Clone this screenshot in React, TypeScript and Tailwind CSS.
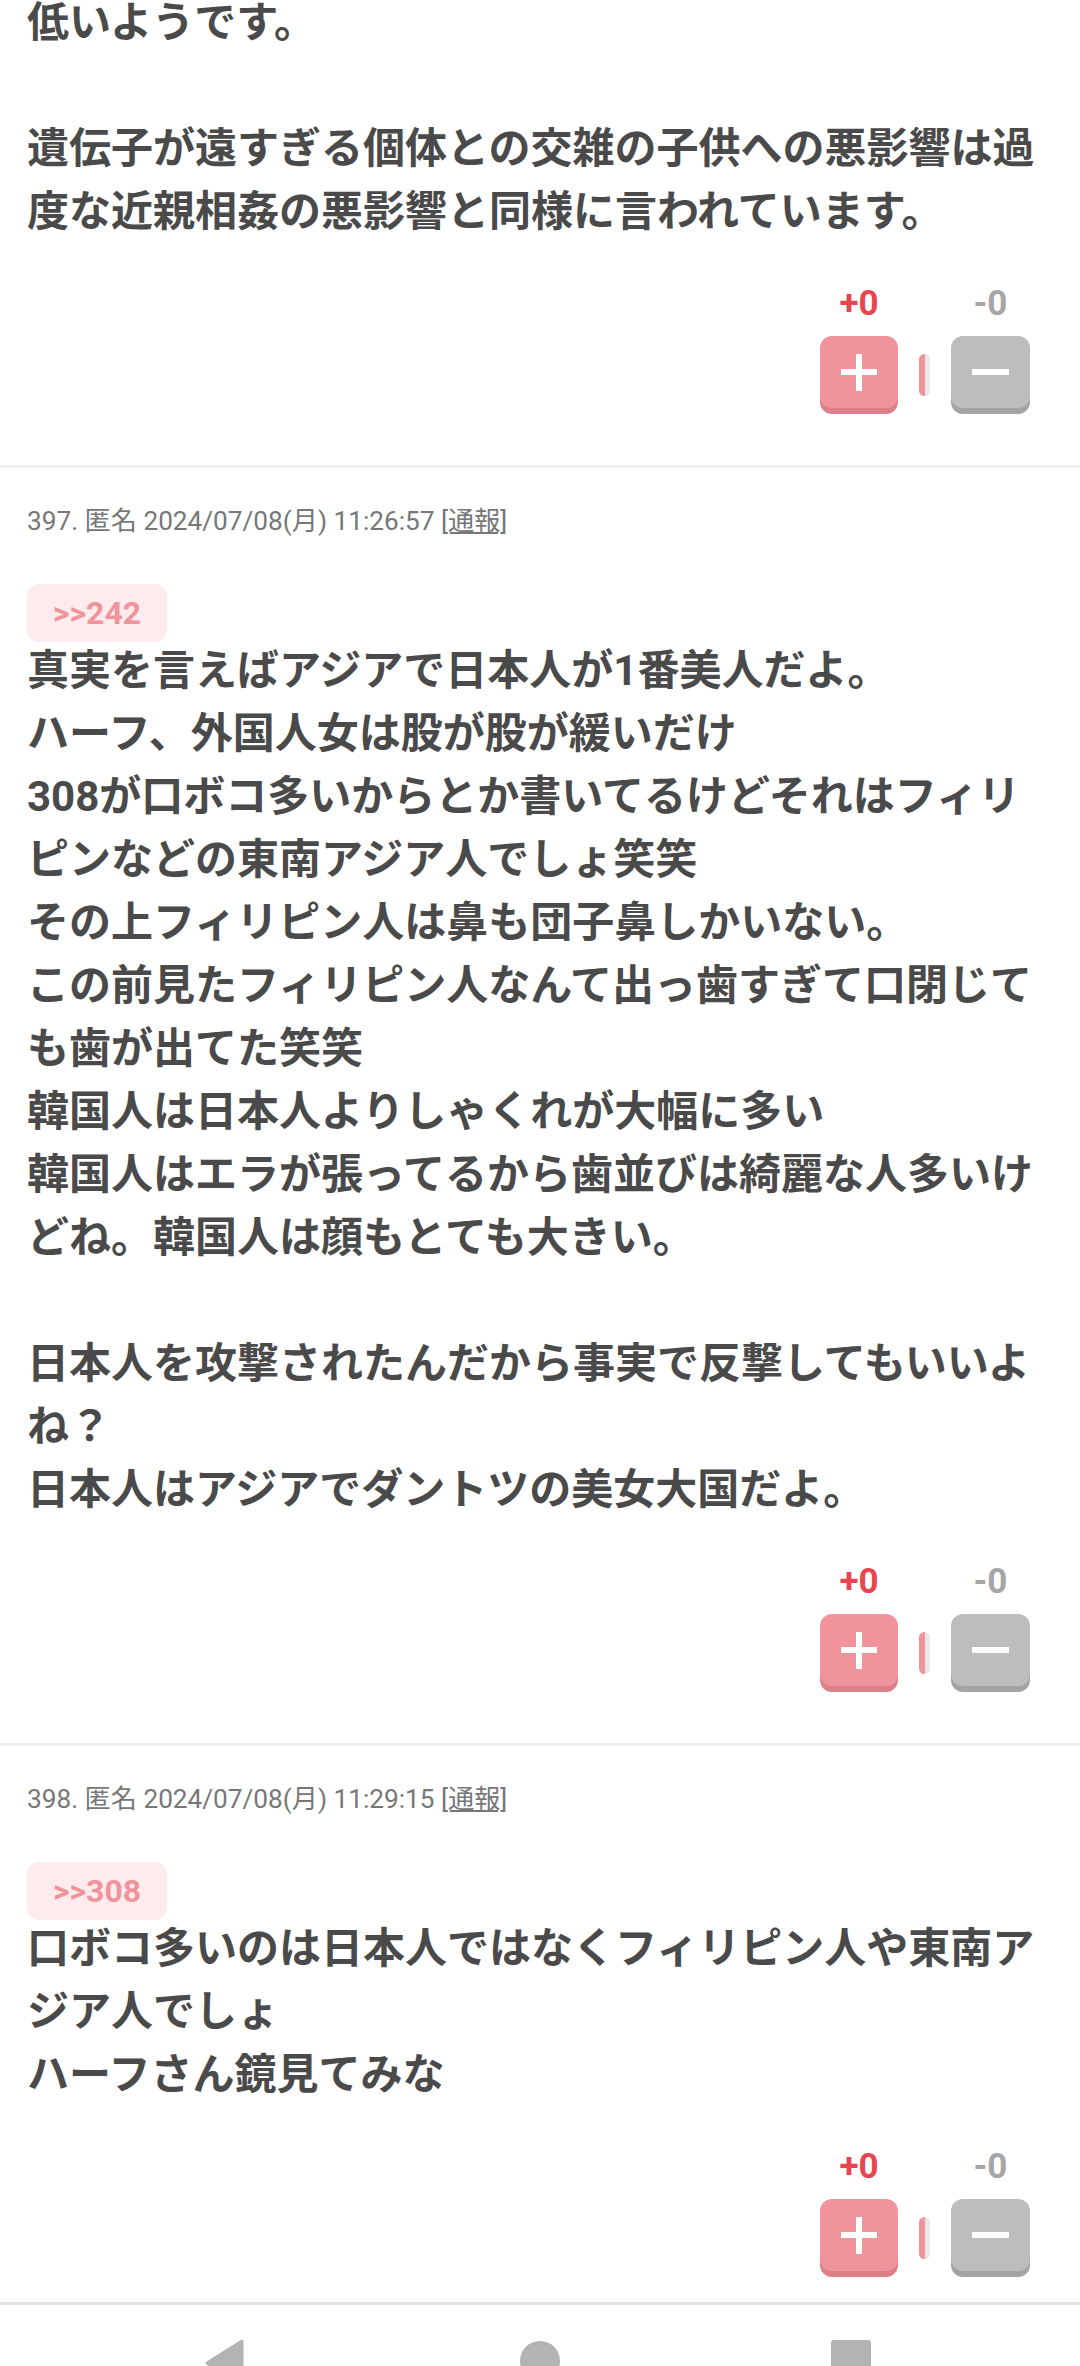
import React from "react";

const sec1 = ["低いようです。", "", "遺伝子が遠すぎる個体との交雑の子供への悪影響は過", "度な近親相姦の悪影響と同様に言われています。"];

const sec2 = [
  "真実を言えばアジアで日本人が1番美人だよ。",
  "ハーフ、外国人女は股が股が緩いだけ",
  "308が口ボコ多いからとか書いてるけどそれはフィリ",
  "ピンなどの東南アジア人でしょ笑笑",
  "その上フィリピン人は鼻も団子鼻しかいない。",
  "この前見たフィリピン人なんて出っ歯すぎて口閉じて",
  "も歯が出てた笑笑",
  "韓国人は日本人よりしゃくれが大幅に多い",
  "韓国人はエラが張ってるから歯並びは綺麗な人多いけ",
  "どね。韓国人は顔もとても大きい。",
  "",
  "日本人を攻撃されたんだから事実で反撃してもいいよ",
  "ね？",
  "日本人はアジアでダントツの美女大国だよ。",
];

const sec3 = ["口ボコ多いのは日本人ではなくフィリピン人や東南ア", "ジア人でしょ", "ハーフさん鏡見てみな"];

function Body({ lines, className = "" }: { lines: string[]; className?: string }) {
  return (
    <div className={"text-[42px] font-bold leading-[63px] text-[#4a4a4a] " + className}>
      {lines.map((l, i) => (
        <div key={i} className="h-[63px] whitespace-nowrap">
          {l || "\u00a0"}
        </div>
      ))}
    </div>
  );
}

function Vote() {
  return (
    <div className="mt-[41px] mr-[23px] flex flex-col items-end">
      <div className="flex gap-[53px] text-[35px] font-bold leading-[40px]">
        <span className="w-[78px] text-center text-[#e9454f]">+0</span>
        <span className="w-[79px] text-center text-[#a6a6a6]">-0</span>
      </div>
      <div className="mt-[12px] flex items-center gap-[21px]">
        <div className="flex h-[72px] w-[78px] items-center justify-center rounded-[12px] bg-[#f0939b] shadow-[0_6px_0_#dc7f88]">
          <svg width="36" height="37" viewBox="0 0 36 37">
            <rect x="0" y="15" width="36" height="6" fill="#fff" />
            <rect x="15" y="0" width="6" height="37" fill="#fff" />
          </svg>
        </div>
        <div className="mt-[6px] flex h-[42px] w-[11px] overflow-hidden rounded-full">
          <div className="h-full w-1/2 bg-[#f0939b]" />
          <div className="h-full w-1/2 bg-[#e8e8e8]" />
        </div>
        <div className="flex h-[72px] w-[79px] items-center justify-center rounded-[12px] bg-[#bdbdbd] shadow-[0_6px_0_#a4a4a4]">
          <svg width="37" height="6" viewBox="0 0 37 6">
            <rect x="0" y="0" width="37" height="6" fill="#fff" />
          </svg>
        </div>
      </div>
    </div>
  );
}

function Post({ no, time, anchor, lines }: { no: number; time: string; anchor: string; lines: string[] }) {
  return (
    <div className="border-b-[3px] border-[#f0f0f0] px-[27px] pt-[34px] pb-[57px]">
      <div className="whitespace-nowrap text-[26.2px] leading-[39px] text-[#777777]">
        {no}. 匿名 2024/07/08(月) {time} <span className="underline">[通報]</span>
      </div>
      <div className="mt-[43px] inline-flex h-[58px] items-center rounded-[12px] bg-[#fdebee] px-[26px] text-[32px] font-bold text-[#f0939b]">
        &gt;&gt;{anchor}
      </div>
      <Body lines={lines} className="-mt-[3px]" />
      <Vote />
    </div>
  );
}

export default function App() {
  return (
    <div className="flex h-[2366px] w-[1080px] flex-col overflow-hidden bg-white font-[Roboto,'Noto_Sans_CJK_JP',sans-serif]">
      <div className="min-h-0 flex-1 overflow-hidden">
        <div className="border-b-[3px] border-[#f0f0f0] px-[27px] pb-[57px]">
          <Body lines={sec1} className="-mt-[9px]" />
          <Vote />
        </div>
        <Post no={397} time="11:26:57" anchor="242" lines={sec2} />
        <Post no={398} time="11:29:15" anchor="308" lines={sec3} />
      </div>
      <div className="flex h-[64px] shrink-0 items-start border-t-[3px] border-[#e2e2e2] bg-white pl-[204px] pt-[34px]">
        <svg width="40" height="48" viewBox="0 0 40 48">
          <path d="M38 2 L38 46 L3 24 Z" fill="#b3b3b3" stroke="#b3b3b3" strokeWidth="3" strokeLinejoin="round" />
        </svg>
        <div className="ml-[276px] mt-[2px] h-[40px] w-[40px] rounded-full bg-[#b3b3b3]" />
        <div className="ml-[271px] mt-[1px] h-[40px] w-[40px] rounded-[3px] bg-[#b3b3b3]" />
      </div>
    </div>
  );
}
